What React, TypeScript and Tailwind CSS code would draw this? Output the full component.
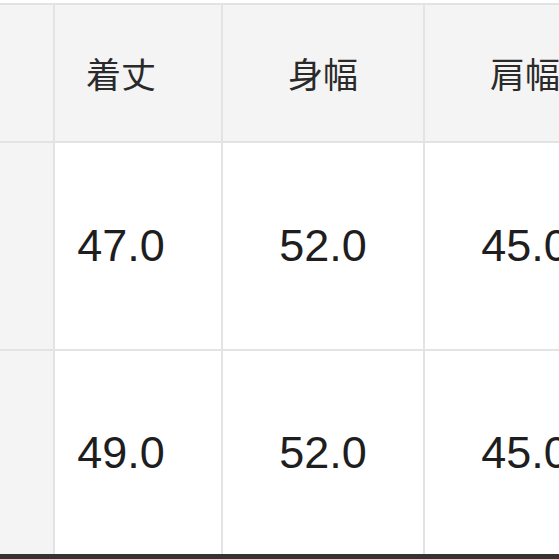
const headers = ['', '着丈', '身幅', '肩幅']
const rows = [
  ['', '47.0', '52.0', '45.0'],
  ['', '49.0', '52.0', '45.0'],
]

export default function App() {
  return (
    <div className="w-[559px] h-[559px] overflow-hidden bg-white pt-[3px] flex flex-col">
      <div className="grid grid-cols-[53px_166px_200px_200px] grid-rows-[136px_206px_203px] gap-[2px] bg-[#e3e3e5] border-t-2 border-[#e3e3e5]">
        {headers.map((h, i) => (
          <div
            key={`h${i}`}
            className={`bg-[#f4f4f5] flex items-center justify-center text-[35px] text-[#2a2a2a] font-['Noto_Sans_CJK_JP',sans-serif] ${i === 1 ? 'pr-[34px]' : ''}`}
          >
            {h}
          </div>
        ))}
        {rows.map((r, ri) =>
          r.map((c, ci) => (
            <div
              key={`r${ri}c${ci}`}
              className={`${ci === 0 ? 'bg-[#f4f4f5]' : 'bg-white'} flex items-center justify-center text-[45px] text-[#1e1e1e] font-['Liberation_Sans',Arial,sans-serif] ${ci === 1 ? 'pr-[34px]' : ''}`}
            >
              {c}
            </div>
          ))
        )}
      </div>
      <div className="h-[5px] bg-[#333333]" />
    </div>
  )
}
